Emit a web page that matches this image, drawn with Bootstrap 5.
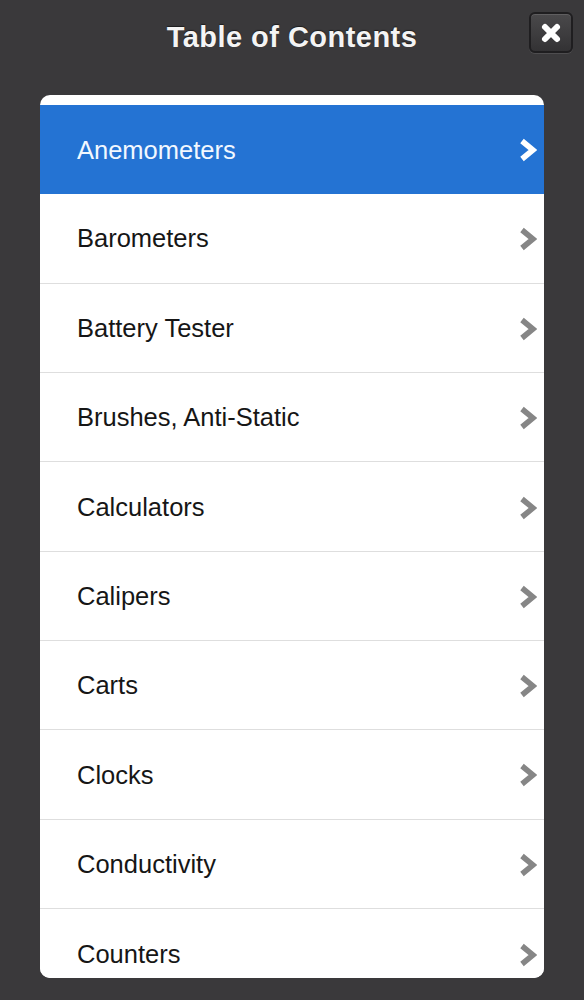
<!DOCTYPE html>
<html lang="en">
<head>
<meta charset="utf-8">
<title>Table of Contents</title>
<link href="https://cdn.jsdelivr.net/npm/bootstrap@5.3.0/dist/css/bootstrap.min.css" rel="stylesheet">
<style>
html, body { height: 1000px; overflow: hidden; }
body { background: #3a393b; font-family: "Liberation Sans", Arial, sans-serif; }
.toc-head { height: 95px; padding: 0 0 20px; }
.toc-title { color: #f4f4f4; font-size: 29px; font-weight: 700; letter-spacing: .47px; line-height: 1; margin: 0; text-shadow: 0 -1px 1px rgba(0,0,0,.5); }
.toc-close { position: absolute; top: 12px; right: 11px; width: 44px; height: 41px; padding: 0; background: linear-gradient(#4a494b, #333234); border: 2px solid #1f1e20; border-radius: 6px; box-shadow: inset 0 1px 0 rgba(255,255,255,.12), 0 1px 0 rgba(255,255,255,.1); }
.toc-panel { margin: 0 40px; height: 883px; padding-top: 10px; background: #fff; border-radius: 10px; overflow: hidden; border: 0; }
.toc-row { flex: none; height: 89.3px; padding: 2px 7px 0 37px; background: #fff; border: 0; border-bottom: 1.5px solid #dedede; border-radius: 0 !important; color: #161616; font-size: 25.5px; line-height: 1; }
.toc-row:last-child { border-bottom: 0; }
.toc-row.active { height: 88.5px; background: #2473d3; color: #f2f8ff; border: 0; margin-top: 0; }
.toc-row.active + .toc-row { height: 90.3px; }
.toc-row svg { flex: none; color: #868686; }
.toc-row.active svg { color: #fff; }
</style>
</head>
<body>
<header class="toc-head position-relative d-flex align-items-center justify-content-center">
  <h1 class="toc-title">Table of Contents</h1>
  <button type="button" class="toc-close d-flex align-items-center justify-content-center" aria-label="Close">
    <svg width="22" height="22" viewBox="0 0 22 22" aria-hidden="true"><path d="M5 5 17 17M17 5 5 17" stroke="#fff" stroke-width="6" stroke-linecap="round" fill="none"/></svg>
  </button>
</header>
<main class="toc-panel list-group">
  <a class="toc-row list-group-item active d-flex align-items-center justify-content-between" href="#">Anemometers<svg width="18" height="24" viewBox="0 0 18 24" aria-hidden="true"><path d="M3 3 14 12 3 21" fill="none" stroke="currentColor" stroke-width="5.5"/></svg></a>
  <a class="toc-row list-group-item d-flex align-items-center justify-content-between" href="#">Barometers<svg width="18" height="24" viewBox="0 0 18 24" aria-hidden="true"><path d="M3 3 14 12 3 21" fill="none" stroke="currentColor" stroke-width="5.5"/></svg></a>
  <a class="toc-row list-group-item d-flex align-items-center justify-content-between" href="#">Battery Tester<svg width="18" height="24" viewBox="0 0 18 24" aria-hidden="true"><path d="M3 3 14 12 3 21" fill="none" stroke="currentColor" stroke-width="5.5"/></svg></a>
  <a class="toc-row list-group-item d-flex align-items-center justify-content-between" href="#">Brushes, Anti-Static<svg width="18" height="24" viewBox="0 0 18 24" aria-hidden="true"><path d="M3 3 14 12 3 21" fill="none" stroke="currentColor" stroke-width="5.5"/></svg></a>
  <a class="toc-row list-group-item d-flex align-items-center justify-content-between" href="#">Calculators<svg width="18" height="24" viewBox="0 0 18 24" aria-hidden="true"><path d="M3 3 14 12 3 21" fill="none" stroke="currentColor" stroke-width="5.5"/></svg></a>
  <a class="toc-row list-group-item d-flex align-items-center justify-content-between" href="#">Calipers<svg width="18" height="24" viewBox="0 0 18 24" aria-hidden="true"><path d="M3 3 14 12 3 21" fill="none" stroke="currentColor" stroke-width="5.5"/></svg></a>
  <a class="toc-row list-group-item d-flex align-items-center justify-content-between" href="#">Carts<svg width="18" height="24" viewBox="0 0 18 24" aria-hidden="true"><path d="M3 3 14 12 3 21" fill="none" stroke="currentColor" stroke-width="5.5"/></svg></a>
  <a class="toc-row list-group-item d-flex align-items-center justify-content-between" href="#">Clocks<svg width="18" height="24" viewBox="0 0 18 24" aria-hidden="true"><path d="M3 3 14 12 3 21" fill="none" stroke="currentColor" stroke-width="5.5"/></svg></a>
  <a class="toc-row list-group-item d-flex align-items-center justify-content-between" href="#">Conductivity<svg width="18" height="24" viewBox="0 0 18 24" aria-hidden="true"><path d="M3 3 14 12 3 21" fill="none" stroke="currentColor" stroke-width="5.5"/></svg></a>
  <a class="toc-row list-group-item d-flex align-items-center justify-content-between" href="#">Counters<svg width="18" height="24" viewBox="0 0 18 24" aria-hidden="true"><path d="M3 3 14 12 3 21" fill="none" stroke="currentColor" stroke-width="5.5"/></svg></a>
</main>
<script src="https://cdn.jsdelivr.net/npm/bootstrap@5.3.0/dist/js/bootstrap.bundle.min.js"></script>
</body>
</html>
